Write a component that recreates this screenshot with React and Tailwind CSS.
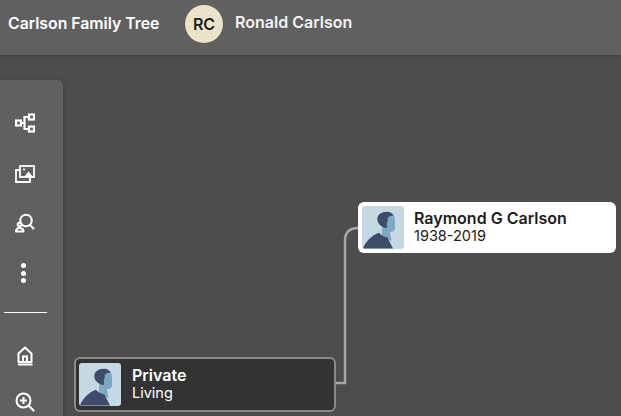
import React from "react";

function Portrait() {
  return (
    <svg className="block rounded-[3px]" width="42" height="43" viewBox="0 0 42 43">
      <rect width="42" height="43" fill="#c5d9e3" />
      <path d="M23 9l8-.5c1.500 1.500 2 3.500 2 6v7.500c0 2.500-1.500 4-5 4.200l1.500 8.800-10-4 1-12z" fill="#7fa9c0" />
      <path d="M15.300 13c0-4.500 4.500-7.500 9.700-7.300 3 .1 5.500 1.500 6.700 3.700-2.500.5-4.500.5-5.500 1.800-.8 1-.3 2.500-.6 4-.2 1-.8 1.500-.8 2.800 0 1.500.6 2.500.2 4-5-.3-9.700-4-9.700-9z" fill="#3f4c69" />
      <path d="M1 42.500c2-6 8-13 16-15.800 2 2.500 4.500 4 8.500 4.800 1.500 3.300 3.500 7 5.500 11z" fill="#3f4c69" />
    </svg>
  );
}

function TreeIcon() {
  return (
    <svg width="20" height="20" viewBox="0 0 20 20" fill="none" stroke="white" strokeWidth="2.200">
      <rect x="1" y="7.500" width="5" height="5" />
      <rect x="14" y="1.500" width="5" height="5" />
      <rect x="14" y="13.500" width="5" height="5" />
      <path d="M6 10h3.500M14 4H9.500v12H14" />
    </svg>
  );
}

function PhotoIcon() {
  return (
    <svg width="20" height="18" viewBox="0 0 20 18" fill="none" stroke="white" strokeWidth="1.800">
      <rect x="5" y="1" width="14" height="11" />
      <path d="M5 5H1v12h14v-4.500" />
      <circle cx="9" cy="4.500" r="1.100" fill="white" stroke="none" />
      <path d="M9 12l4.500-5.500 4.500 5.500z" fill="white" stroke="none" />
    </svg>
  );
}

function PersonSearchIcon() {
  return (
    <svg width="20" height="20" viewBox="0 0 20 20" fill="none" stroke="white" strokeWidth="2">
      <circle cx="11" cy="7.500" r="5.800" />
      <path d="M15 12l3.500 3.500" strokeLinecap="round" />
      <circle cx="4.500" cy="11.500" r="1.800" fill="#606060" />
      <path d="M1 18.500c0-2.500 1.500-3.500 3.500-3.500s4 1 4 3.500z" fill="#606060" strokeLinejoin="round" />
    </svg>
  );
}

function HomeIcon() {
  return (
    <svg width="16" height="20" viewBox="0 0 16 20" fill="none" stroke="white" strokeWidth="2">
      <path d="M1.500 16V7.500L8 1.500l6.500 6V16z" strokeLinejoin="round" />
      <path d="M6 16v-5.500h4V16" />
      <path d="M1 18.500h14.500" />
    </svg>
  );
}

function ZoomIcon() {
  return (
    <svg width="20" height="20" viewBox="0 0 20 20" fill="none" stroke="white" strokeWidth="2">
      <circle cx="8.500" cy="8.500" r="7" />
      <path d="M13.800 13.800l4.700 4.700" strokeLinecap="round" strokeWidth="2.200" />
      <path d="M8.500 5v7M5 8.500h7" />
    </svg>
  );
}

function PersonCard({ name, detail, dark, className }) {
  return (
    <div
      className={
        "absolute flex items-center rounded-md " +
        (dark
          ? "bg-[#333333] border-2 border-[#8a8a8a] text-white pl-[3px] gap-[11px] "
          : "bg-white text-[#1d1d1d] pl-1 gap-[10px] ") +
        className
      }
    >
      <Portrait />
      <div className="leading-[18px] -mt-[2px]">
        <div className="text-[16px] font-semibold">{name}</div>
        <div className="text-[14.500px]">{detail}</div>
      </div>
    </div>
  );
}

function App() {
  return (
    <div className="h-[416px] w-[621px] overflow-hidden flex flex-col bg-[#4d4d4d] font-['Inter',sans-serif]">
      <header className="h-[55px] shrink-0 flex items-start bg-[#606060] shadow-[0_1px_3px_rgba(0,0,0,0.2)] pl-2 pt-[5px]">
        <div className="text-[15.800px] leading-[22px] font-semibold text-white mt-2 w-[177px]">Carlson Family Tree</div>
        <div className="w-[38px] h-[38px] rounded-full bg-[#ece2c9] text-[#1d1d1d] flex items-center justify-center text-[16px] font-semibold">
          RC
        </div>
        <div className="text-[16px] leading-[22px] font-semibold text-[#f2f2f2] ml-3 mt-[6px]">Ronald Carlson</div>
      </header>

      <div className="relative flex-1">
        <aside className="absolute left-0 top-[25px] w-[63px] h-[400px] bg-[#606060] rounded-tr-md shadow-[1px_0_3px_rgba(0,0,0,0.15)] flex flex-col">
          <div className="w-[50px] flex flex-col items-center pt-[33px]">
            <TreeIcon />
            <div className="mt-[32px]"><PhotoIcon /></div>
            <div className="mt-[30px]"><PersonSearchIcon /></div>
            <div className="mt-[30px] -ml-[3px] flex flex-col gap-[2.500px]">
              <span className="block w-[5px] h-[5px] rounded-full bg-white" />
              <span className="block w-[5px] h-[5px] rounded-full bg-white" />
              <span className="block w-[5px] h-[5px] rounded-full bg-white" />
            </div>
          </div>
          <div className="ml-1 w-[43px] h-px bg-white mt-[29px]" />
          <div className="w-[50px] flex flex-col items-center pt-[33px]">
            <HomeIcon />
            <div className="mt-[26px]"><ZoomIcon /></div>
          </div>
        </aside>

        <svg className="absolute left-[330px] top-[170px]" width="32" height="165" viewBox="0 0 32 165" fill="none">
          <path d="M4 158h11V16c0-8 4-13 13-13" stroke="#a8a8a8" strokeWidth="2.500" />
        </svg>

        <PersonCard name="Raymond G Carlson" detail="1938-2019" className="left-[358px] top-[147px] w-[258px] h-[51px]" />
        <PersonCard name="Private" detail="Living" dark className="left-[74px] top-[302px] w-[262px] h-[55px]" />
      </div>
    </div>
  );
}

export default App;
